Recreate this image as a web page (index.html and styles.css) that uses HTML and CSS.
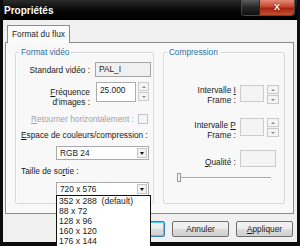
FILE: index.html
```html
<!DOCTYPE html>
<html lang="fr">
<head>
    <meta charset="UTF-8">
    <title>Propriétés</title>
    <link rel="stylesheet" href="styles.css">
</head>
<body>

    <div class="window">

        <!-- Title bar -->
        <div class="titlebar">
            <span class="title">Propriétés</span>
            <div class="caption">
                <span class="cap-glass"></span>
                <span class="cap-close">X</span>
            </div>
        </div>

        <div class="client">

            <!-- Tabs -->
            <div class="tabs">
                <span class="tab active">Format du flux</span>
            </div>

            <div class="tab-panel">

                <!-- Left group -->
                <fieldset class="group group-video">
                    <legend>Format vidéo</legend>

                    <div class="row row-std">
                        <span class="lbl">Standard vidéo :</span>
                        <span class="field readonly">PAL_I</span>
                    </div>

                    <div class="row row-freq">
                        <span class="lbl two-lines"><u>F</u>réquence<br>d'images :</span>
                        <span class="field edit">25.000</span>
                        <span class="spin"><span class="spin-up"></span><span class="spin-down"></span></span>
                    </div>

                    <div class="row row-flip">
                        <span class="lbl disabled"><u>R</u>etourner horizontalement :</span>
                        <span class="check"></span>
                    </div>

                    <div class="caption-text"><u>E</u>space de couleurs/compression :</div>
                    <div class="combo">
                        <span class="combo-value">RGB 24</span>
                        <span class="combo-btn"></span>
                    </div>

                    <div class="caption-text">Taille de so<u>r</u>tie :</div>
                    <div class="combo open">
                        <span class="combo-value">720 x 576</span>
                        <span class="combo-btn"></span>
                        <ul class="dropdown">
                            <li>352 x 288 &nbsp;(default)</li>
                            <li>88 x 72</li>
                            <li>128 x 96</li>
                            <li>160 x 120</li>
                            <li>176 x 144</li>
                        </ul>
                    </div>
                </fieldset>

                <!-- Right group -->
                <fieldset class="group group-comp">
                    <legend>Compression</legend>

                    <div class="row row-iframe">
                        <span class="lbl two-lines">Intervalle <u>I</u><br>Frame :</span>
                        <span class="field off small"></span>
                        <span class="spin off"><span class="spin-up"></span><span class="spin-down"></span></span>
                    </div>

                    <div class="row row-pframe">
                        <span class="lbl two-lines">Intervalle <u>P</u><br>Frame :</span>
                        <span class="field off small tall"></span>
                        <span class="spin off"><span class="spin-up"></span><span class="spin-down"></span></span>
                    </div>

                    <div class="row row-quality">
                        <span class="lbl"><u>Q</u>ualité :</span>
                        <span class="field off wide"></span>
                    </div>

                    <div class="slider">
                        <span class="thumb"></span>
                        <span class="track"></span>
                    </div>
                </fieldset>
            </div>

            <!-- Dialog buttons -->
            <div class="buttons">
                <button class="btn default">OK</button>
                <button class="btn">Annuler</button>
                <button class="btn"><u>A</u>ppliquer</button>
            </div>
        </div>
    </div>

</body>
</html>
```

FILE: styles.css
```css
body {
    margin: 0;
    font-family: "Liberation Sans", Arial, sans-serif;
    font-size: 8.3px;
    color: #1b1b1b;
    background-color: #000;
}

u {
    text-decoration: underline;
    text-underline-offset: 1px;
}

/* Window frame */
.window {
    width: 300px;
    height: 246px;
    box-sizing: border-box;
    display: flex;
    flex-direction: column;
    background-color: #0c0c0c;
    border-left: 3px solid #0c0c0c;
    border-right: 3px solid #0c0c0c;
    border-bottom: 4px solid #0c0c0c;
}

/* Title bar */
.titlebar {
    height: 20px;
    display: flex;
    align-items: flex-start;
    justify-content: space-between;
    background: linear-gradient(to bottom, #2b2b2b, #050505 55%, #000);
}

.title {
    color: #fff;
    font-weight: bold;
    font-size: 10px;
    margin: 5px 0 0 1px;
}

.caption {
    display: flex;
    height: 15px;
    margin-right: 2px;
    border: 1px solid #4a4a4a;
    border-top: none;
    border-radius: 0 0 4px 4px;
    overflow: hidden;
}

.cap-glass {
    width: 17px;
    background: linear-gradient(to bottom, #5c5c5c, #262626 50%, #101010);
    border-right: 1px solid #2a2a2a;
}

.cap-close {
    width: 34px;
    color: #fff;
    font-weight: bold;
    font-size: 9px;
    text-align: center;
    line-height: 14px;
    background: linear-gradient(to bottom, #e28a78, #c8452c 45%, #a32410 55%, #c4502f);
    text-shadow: 0 0 2px #5a0d00;
}

/* Client area */
.client {
    flex: 1;
    display: flex;
    flex-direction: column;
    background-color: #f0f0f0;
}

.tabs {
    display: flex;
    padding: 5px 0 0 4px;
    height: 17px;
}

.tab {
    width: 63px;
    height: 18px;
    box-sizing: border-box;
    border: 1px solid #8d8d8d;
    border-bottom: none;
    background-color: #fbfbfb;
    text-align: center;
    line-height: 16px;
    position: relative;
    z-index: 1;
}

.tab-panel {
    display: flex;
    gap: 9px;
    height: 172px;
    box-sizing: border-box;
    margin: 0 3px 0 2px;
    padding: 4px 8px 9px 9px;
    border: 1px solid #8d8d8d;
    background-color: #f8f8f8;
}

/* Group boxes */
.group {
    margin: 0;
    padding: 0;
    min-width: 0;
    border: 1px solid #d5d9dc;
    border-radius: 2px;
    box-shadow: inset 1px 1px 0 #fff;
    display: flex;
    flex-direction: column;
}

.group legend {
    color: #2f6da3;
    padding: 0 2px;
    margin-left: 3px;
    line-height: 10px;
}

.group-video {
    width: 139px;
}

.group-comp {
    width: 122px;
}

.row {
    display: flex;
    align-items: flex-start;
}

.lbl {
    text-align: right;
    line-height: 10px;
}

.disabled {
    color: #a3a3a3;
}

.group-video .lbl {
    width: 74px;
}

.row-std {
    margin-top: 5px;
    align-items: center;
}

.row-freq {
    margin-top: 5px;
    height: 20px;
}

.row-freq .lbl {
    padding-top: 5px;
}

.row-flip {
    margin-top: 12px;
    align-items: center;
}

.row-flip .lbl {
    width: auto;
    flex: 1;
}

.field {
    box-sizing: border-box;
    border: 1px solid #abadb3;
    background-color: #fff;
    line-height: 13px;
    padding-left: 3px;
}

.readonly {
    width: 56px;
    height: 15px;
    margin-left: 5px;
    background-color: #f0f0f0;
    border-color: #a5a5a5;
}

.edit {
    width: 40px;
    height: 20px;
    margin-left: 6px;
    line-height: 14px;
}

.spin {
    display: flex;
    flex-direction: column;
    gap: 1px;
    width: 11px;
    margin-left: 2px;
}

.spin span {
    height: 9px;
    box-sizing: border-box;
    border: 1px solid #c9c9c9;
    background-color: #f4f4f4;
    position: relative;
}

.spin span::after {
    content: "";
    position: absolute;
    left: 3px;
    top: 3px;
    border-left: 2px solid transparent;
    border-right: 2px solid transparent;
}

.spin-up::after {
    border-bottom: 2px solid #8a8a8a;
}

.spin-down::after {
    border-top: 2px solid #8a8a8a;
}

.check {
    width: 10px;
    height: 10px;
    box-sizing: border-box;
    border: 1px solid #c2c2c2;
    background-color: #f6f6f6;
    margin: 0 5px 0 4px;
}

.caption-text {
    margin: 6px 0 0 5px;
    line-height: 10px;
}

/* Combo boxes */
.combo {
    position: relative;
    display: flex;
    align-items: center;
    justify-content: space-between;
    width: 93px;
    height: 14px;
    box-sizing: border-box;
    margin: 6px 0 0 40px;
    border: 1px solid #a9a9a9;
    background-color: #fff;
}

.combo-value {
    padding-left: 3px;
}

.combo-btn {
    width: 10px;
    height: 10px;
    margin-right: 1px;
    box-sizing: border-box;
    border: 1px solid #c4c4c4;
    background-color: #f2f2f2;
    position: relative;
}

.combo-btn::after {
    content: "";
    position: absolute;
    left: 2px;
    top: 3px;
    border-left: 2px solid transparent;
    border-right: 2px solid transparent;
    border-top: 3px solid #111;
}

.dropdown {
    position: absolute;
    left: -1px;
    top: 12px;
    width: 93px;
    margin: 0;
    padding: 0;
    list-style: none;
    background-color: #fff;
    border: 1px solid #111;
    z-index: 5;
}

.dropdown li {
    height: 10px;
    line-height: 10px;
    padding-left: 2px;
    font-size: 8.6px;
}

/* Compression group */
.group-comp .lbl {
    width: 72px;
}

.row-iframe {
    margin-top: 28px;
    height: 17px;
}

.row-pframe {
    margin-top: 16px;
    height: 18px;
}

.row-pframe .lbl {
    padding-top: 2px;
}

.row-quality {
    margin-top: 14px;
    align-items: flex-end;
}

.off {
    background-color: #f4f4f4;
    border-color: #cbcbcb;
    margin-left: 4px;
}

.small {
    width: 24px;
    height: 17px;
}

.tall {
    height: 18px;
}

.wide {
    width: 36px;
    height: 17px;
}

.row-iframe .spin,
.row-pframe .spin {
    margin-left: 3px;
    width: 12px;
}

.slider {
    display: flex;
    align-items: center;
    height: 9px;
    margin: 6px 0 0 13px;
}

.thumb {
    width: 4px;
    height: 9px;
    box-sizing: border-box;
    border: 1px solid #9a9a9a;
    background-color: #f4f4f4;
}

.track {
    width: 90px;
    height: 2px;
    border-top: 1px solid #a8a8a8;
    border-bottom: 1px solid #fff;
    box-sizing: border-box;
}

/* Dialog buttons */
.buttons {
    display: flex;
    justify-content: flex-end;
    gap: 7px;
    margin: 7px 4px 0 0;
}

.btn {
    width: 57px;
    height: 16px;
    padding: 0;
    font-family: inherit;
    font-size: 8.3px;
    color: #1b1b1b;
    border: 1px solid #707070;
    border-radius: 2px;
    background: linear-gradient(to bottom, #f3f3f3, #ebebeb 50%, #dddddd 51%, #cfcfcf);
}

.btn.default {
    border-color: #3c7fb1;
    box-shadow: inset 0 0 0 1px #48d0f8;
}
```
